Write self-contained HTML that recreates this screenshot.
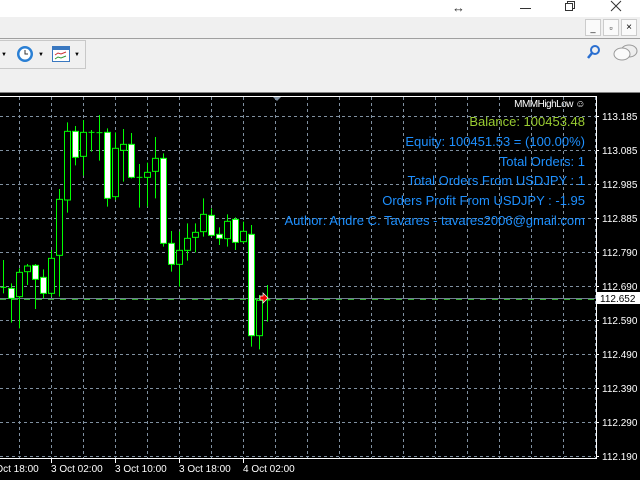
<!DOCTYPE html>
<html><head><meta charset="utf-8"><style>
*{margin:0;padding:0}
body{width:640px;height:480px;overflow:hidden;background:#f0f0f0;position:relative;font-family:"Liberation Sans",sans-serif}
.abs{position:absolute}
</style></head><body>
<div class="abs" style="left:0;top:0;width:640px;height:17px;background:#fff"></div>
<div class="abs" style="left:452px;top:0;font-size:13px;color:#333">↔</div>
<div class="abs" style="left:520px;top:8px;width:11px;height:1px;background:#333"></div>
<svg class="abs" style="left:564px;top:0" width="14" height="12"><rect x="1.5" y="3.5" width="7" height="7" fill="none" stroke="#333"/><path d="M3.5 3.5V1.5h7v7h-2" fill="none" stroke="#333"/></svg>
<svg class="abs" style="left:610px;top:0" width="12" height="12"><path d="M1 1L11 11M11 1L1 11" stroke="#333"/></svg>
<div class="abs" style="left:0;top:38px;width:640px;height:1px;background:#a0a0a0"></div>
<div class="abs" style="left:585px;top:19px;width:52px;height:17px;">
<div class="abs" style="left:0;top:0;width:16px;height:17px;background:#fafafa;border:1px solid #ccc;box-sizing:border-box;font-size:9px;text-align:center;line-height:16px">_</div>
<div class="abs" style="left:18px;top:0;width:16px;height:17px;background:#fafafa;border:1px solid #ccc;box-sizing:border-box;font-size:9px;text-align:center;line-height:16px">▫</div>
<div class="abs" style="left:36px;top:0;width:16px;height:17px;background:#fafafa;border:1px solid #ccc;box-sizing:border-box;font-size:10px;text-align:center;line-height:16px">×</div>
</div>
<div class="abs" style="left:-1px;top:40px;width:86px;height:27px;border:1px solid #c8c8c8;border-left:none"></div>
<div class="abs" style="left:1px;top:52px;font-size:6px">▼</div>
<svg class="abs" style="left:16px;top:45px" width="18" height="18"><circle cx="9" cy="9" r="8" fill="#2a7fd4"/><circle cx="9" cy="9" r="5.5" fill="#fff"/><path d="M9 5V9H12" stroke="#333" fill="none"/></svg>
<div class="abs" style="left:38px;top:52px;font-size:6px">▼</div>
<svg class="abs" style="left:52px;top:46px" width="18" height="16"><rect x="0.5" y="0.5" width="17" height="15" fill="#fff" stroke="#3a78c0"/><rect x="1" y="1" width="16" height="3" fill="#3a78c0"/><path d="M3 9l3-2 3 1 5-2" stroke="#c33" fill="none"/><path d="M3 13l3-2 3 1 5-2" stroke="#393" fill="none"/></svg>
<div class="abs" style="left:74px;top:52px;font-size:6px">▼</div>
<svg class="abs" style="left:586px;top:44px" width="14" height="16"><circle cx="9" cy="6" r="4" fill="none" stroke="#2a6fd0" stroke-width="2"/><path d="M6 9L2 14" stroke="#2a6fd0" stroke-width="2.5"/></svg>
<svg class="abs" style="left:612px;top:44px" width="26" height="18"><ellipse cx="17" cy="7" rx="8" ry="6" fill="#eee" stroke="#999"/><ellipse cx="10" cy="10" rx="8" ry="6" fill="#fafafa" stroke="#999"/></svg>
<div class="abs" style="left:0;top:92px;width:640px;height:1px;background:#808080"></div>
<div class="abs" style="left:0;top:93px;width:640px;height:387px;background:#000"></div>
<svg class="abs" style="left:0;top:0" width="640" height="480" id="ch"></svg>
<div class="abs" style="right:55px;top:99px;font-size:10px;color:#fff;letter-spacing:-0.5px">MMMHighLow ☺</div>
<div class="abs" style="right:55px;top:112px;font-size:13px;line-height:19.8px;text-align:right;color:#1e90ff;white-space:nowrap">
<div style="color:#9acd32">Balance: 100453.48</div>
<div>Equity: 100451.53 = (100.00%)</div>
<div>Total Orders: 1</div>
<div>Total Orders From USDJPY : 1</div>
<div>Orders Profit From USDJPY : -1.95</div>
<div>Author: Andre C. Tavares - tavares2006@gmail.com</div>
</div>
<script>
var s='',ys=[116,150,184,218,252,286,320,354,388,422,456];
var lab=['113.185','113.085','112.985','112.885','112.790','112.690','112.590','112.490','112.390','112.290','112.190'];
ys.forEach(function(y,i){s+='<line x1="0" x2="595" y1="'+(y+.5)+'" y2="'+(y+.5)+'" stroke="#8090a0" stroke-dasharray="3,3"/>';
s+='<line x1="596" x2="599" y1="'+(y+.5)+'" y2="'+(y+.5)+'" stroke="#fff"/>';
s+='<text x="602" y="'+(y+4)+'" font-size="10" fill="#fff" font-family="Liberation Sans">'+lab[i]+'</text>';});
for(var x=19;x<596;x+=32){s+='<line y1="97" y2="458" x1="'+(x+.5)+'" x2="'+(x+.5)+'" stroke="#8090a0" stroke-dasharray="3,3"/>';}
s+='<path d="M0 96.5H596.5V458.5H0" fill="none" stroke="#fff"/>';
s+='<path d="M273 97h8l-4 4z" fill="#8090a0"/>';
[[51,'3 Oct 02:00'],[115,'3 Oct 10:00'],[179,'3 Oct 18:00'],[243,'4 Oct 02:00'],[-13,'3 Oct 18:00']].forEach(function(t){
s+='<line x1="'+(t[0]+.5)+'" x2="'+(t[0]+.5)+'" y1="459" y2="463" stroke="#fff"/><text x="'+t[0]+'" y="472" font-size="10" fill="#fff" font-family="Liberation Sans">'+t[1]+'</text>';});
s+='<line x1="0" x2="596" y1="298.5" y2="298.5" stroke="#708090"/>';
s+='<line x1="0" x2="596" y1="299.5" y2="299.5" stroke="#3a3" stroke-dasharray="6,6"/>';
s+='<rect x="597" y="292" width="43" height="12" fill="#fff"/><text x="600" y="302" font-size="10" fill="#000" font-family="Liberation Sans">112.652</text>';
var c=[[450,550,532,532,0],[520,638,535,565,1],[475,655,487,560,0],[462,525,468,485,0],[462,597,466,508,1],[478,565,502,550,1],[420,560,445,550,0],[237,560,268,436,0],[37,308,64,270,0],[48,166,64,142,1],[30,197,67,139,0],[60,125,67,67,0],[15,152,68,70,0],[55,290,67,265,1],[67,270,115,260,0],[57,215,103,121,0],[69,205,103,202,1],[162,293,202,202,0],[158,290,187,202,0],[81,265,145,184,0],[130,410,145,400,1],[363,485,400,463,1],[365,530,421,463,0],[340,452,385,421,0],[340,427,367,382,0],[265,380,313,365,0],[295,380,316,376,1],[352,405,373,385,1],[313,410,334,386,0],[322,420,328,397,1],[335,400,364,395,0],[345,710,373,677,1],[555,718,571,677,0],[525,635,570,570,0]];
c.forEach(function(d,i){var x=3.5+i*8,f=function(v){return 110+v/3;};
s+='<line x1="'+x+'" x2="'+x+'" y1="'+f(d[0])+'" y2="'+f(d[1])+'" stroke="#0f0"/>';
var t=f(d[2]),b=f(d[3]);
if(b-t<1.5){s+='<line x1="'+(x-3)+'" x2="'+(x+3)+'" y1="'+t+'" y2="'+t+'" stroke="#0f0"/>';}
else s+='<rect x="'+(x-3)+'" y="'+t+'" width="6" height="'+(b-t)+'" fill="'+(d[4]?'#fff':'#000')+'" stroke="#0f0"/>';});
s+='<path d="M260 296h3v-3l5 5-5 5v-3h-3z" fill="#e00" stroke="#fff" stroke-width=".7"/>';
document.getElementById('ch').innerHTML=s;
</script>
</body></html>
